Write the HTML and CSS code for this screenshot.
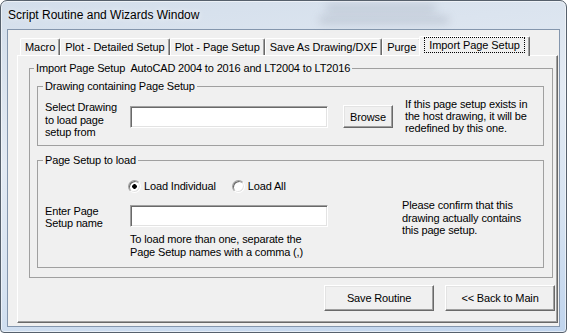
FILE: index.html
```html
<!DOCTYPE html>
<html lang="en">
<head>
  <meta charset="UTF-8" />
  <title>Script Routine and Wizards Window</title>
  <link rel="stylesheet" href="styles.css">
</head>
<body>

  <div class="window">
    <div class="titlebar">
      <span class="ghost ghost-a"></span>
      <span class="ghost ghost-b"></span>
      <span class="title">Script Routine and Wizards Window</span>
    </div>

    <div class="client">
      <div class="tabs">
        <div class="tab">Macro</div>
        <div class="tab">Plot - Detailed Setup</div>
        <div class="tab">Plot - Page Setup</div>
        <div class="tab">Save As Drawing/DXF</div>
        <div class="tab">Purge</div>
        <div class="tab active"><span class="focus">Import Page Setup</span></div>
      </div>

      <div class="panel">
        <fieldset class="group outer">
          <legend>Import Page Setup&nbsp; AutoCAD 2004 to 2016 and LT2004 to LT2016</legend>

          <fieldset class="group inner">
            <legend>Drawing containing Page Setup</legend>
            <div class="row pick">
              <label class="caption">Select Drawing<br>to load page<br>setup from</label>
              <input class="textbox" type="text" />
              <button class="btn browse">Browse</button>
              <p class="hint">If this page setup exists in<br>the host drawing, it will be<br>redefined by this one.</p>
            </div>
          </fieldset>

          <fieldset class="group inner load">
            <legend>Page Setup to load</legend>
            <div class="radios">
              <label class="radio"><span class="dot checked"></span>Load Individual</label>
              <label class="radio"><span class="dot"></span>Load All</label>
            </div>
            <div class="row names">
              <label class="caption">Enter Page<br>Setup name</label>
              <div class="field">
                <input class="textbox" type="text" />
                <p class="note">To load more than one, separate the<br>Page Setup names with a comma (,)</p>
              </div>
              <p class="hint">Please confirm that this<br>drawing actually contains<br>this page setup.</p>
            </div>
          </fieldset>
        </fieldset>

        <div class="actions">
          <button class="btn action">Save Routine</button>
          <button class="btn action">&lt;&lt; Back to Main</button>
        </div>
      </div>
    </div>
  </div>

</body>
</html>
```

FILE: styles.css
```css
body {
  margin: 0;
  font-family: "Liberation Sans", Arial, sans-serif;
  font-size: 11px;
  letter-spacing: -0.15px;
  color: #000;
  background: #fff;
}
.window {
  width: 567px;
  height: 333px;
  box-sizing: border-box;
  border: 1px solid #56606c;
  border-radius: 7px 7px 4px 4px;
  background: linear-gradient(172deg, #d3deeb 0%, #e3eaf3 40%, #d7e3f1 70%, #c0d4ed 100%);
  box-shadow: inset 0 0 0 1px rgba(255, 255, 255, 0.55);
  display: flex;
  flex-direction: column;
  overflow: hidden;
}
.titlebar {
  position: relative;
  height: 28px;
  flex: none;
  display: flex;
  align-items: center;
  padding-left: 7px;
  font-size: 12px;
  letter-spacing: 0;
}
.title {
  position: relative;
  text-shadow: 0 0 6px rgba(255, 255, 255, 0.9);
}
.ghost {
  position: absolute;
  height: 8px;
  border-radius: 4px;
  background: rgba(110, 120, 135, 0.22);
  filter: blur(4px);
}
.ghost-a {
  left: 325px;
  top: 3px;
  width: 110px;
}
.ghost-b {
  left: 318px;
  top: 15px;
  width: 130px;
}
.client {
  margin: 0 6px 5px 6px;
  height: 298px;
  box-sizing: border-box;
  border: 1px solid #8496ad;
  background: #f0f0f0;
}

/* tab strip */
.tabs {
  position: relative;
  z-index: 1;
  display: flex;
  align-items: flex-end;
  height: 26px;
  box-sizing: border-box;
  padding: 6px 0 0 12px;
  margin-bottom: -1px;
  letter-spacing: -0.07px;
}
.tab {
  height: 17px;
  box-sizing: border-box;
  margin-bottom: 1px;
  padding: 0 4px;
  line-height: 16px;
  white-space: nowrap;
  background: #f0f0f0;
  border: 1px solid;
  border-bottom: 0;
  border-color: #fff #696969 #f0f0f0 #fff;
  border-radius: 2px 2px 0 0;
  box-shadow: inset -1px 0 #a0a0a0;
}
.tab.active {
  position: relative;
  z-index: 1;
  height: 20px;
  margin: 0 -2px 0 -2px;
  padding: 0 4px 3px;
  display: flex;
  align-items: center;
}
.focus {
  border: 1px dotted #000;
  padding: 1px 4px;
  line-height: 12px;
}

/* page */
.panel {
  margin-left: 9px;
  width: 541px;
  height: 268px;
  box-sizing: border-box;
  border: 1px solid;
  border-color: #fff #696969 #696969 #fff;
  box-shadow: inset -1px -1px #a0a0a0;
  display: flex;
  flex-direction: column;
}
.group {
  margin: 0;
  padding: 0;
  min-width: 0;
  box-sizing: border-box;
  border: 1px solid #a0a0a0;
}
.group > legend {
  padding: 0 2px;
  line-height: 13px;
}
.outer {
  width: 524px;
  margin: 6px 0 0 11px;
  padding: 0 8px 9px 7px;
}
.outer > legend {
  margin-left: -3px;
}
.inner {
  margin-top: 5px;
}
.inner > legend {
  margin-left: 5px;
}
.inner.load {
  margin-top: 8px;
}
.row {
  display: flex;
  align-items: flex-start;
  padding-left: 7px;
  box-sizing: border-box;
}
.row.pick {
  height: 52px;
  padding-top: 5px;
}
.row.names {
  height: 68px;
  margin-top: 6px;
}
.caption {
  width: 85px;
  flex: none;
}
.pick .caption {
  margin-top: 3px;
  line-height: 12.5px;
}
.names .caption {
  margin-top: 6px;
  line-height: 12px;
}
p {
  margin: 0;
  white-space: nowrap;
}
.hint {
  line-height: 12px;
}
.pick .hint {
  margin-left: 12px;
}
.names .hint {
  margin-left: 74px;
  line-height: 12.5px;
}
.textbox {
  width: 198px;
  height: 22px;
  margin: 0;
  padding: 0 3px;
  box-sizing: border-box;
  font: inherit;
  background: #fff;
  border: 1px solid;
  border-color: #a0a0a0 #fff #fff #a0a0a0;
  box-shadow: inset 1px 1px #696969, inset -1px -1px #e3e3e3;
  outline: none;
}
.pick .textbox {
  margin-top: 8px;
}
.field {
  width: 198px;
  flex: none;
}
.names .textbox {
  margin-top: 6px;
}
.note {
  margin-top: 6px;
  line-height: 13px;
}
.btn {
  margin: 0;
  padding: 0;
  box-sizing: border-box;
  font: inherit;
  letter-spacing: inherit;
  color: #000;
  background: #f0f0f0;
  border: 1px solid;
  border-color: #fff #696969 #696969 #fff;
  box-shadow: inset -1px -1px #a0a0a0, inset 1px 1px #e3e3e3;
}
.browse {
  width: 50px;
  height: 23px;
  margin: 7px 0 0 15px;
}
.radios {
  display: flex;
  gap: 16px;
  height: 13px;
  margin-top: 13px;
  padding-left: 90px;
  line-height: 13px;
}
.radio {
  display: flex;
  align-items: center;
  gap: 3px;
  white-space: nowrap;
}
.dot {
  width: 13px;
  height: 13px;
  box-sizing: border-box;
  border-radius: 50%;
  background: #fff;
  border: 1px solid;
  border-color: #a0a0a0 #fff #fff #a0a0a0;
  box-shadow: inset 1px 1px #696969, inset -1px -1px #e3e3e3;
}
.dot.checked {
  background: radial-gradient(circle, #000 0 2px, #fff 2.6px);
}
.actions {
  display: flex;
  justify-content: flex-end;
  gap: 11px;
  margin-top: 7px;
  padding-right: 2px;
}
.action {
  width: 110px;
  height: 26px;
}
```
